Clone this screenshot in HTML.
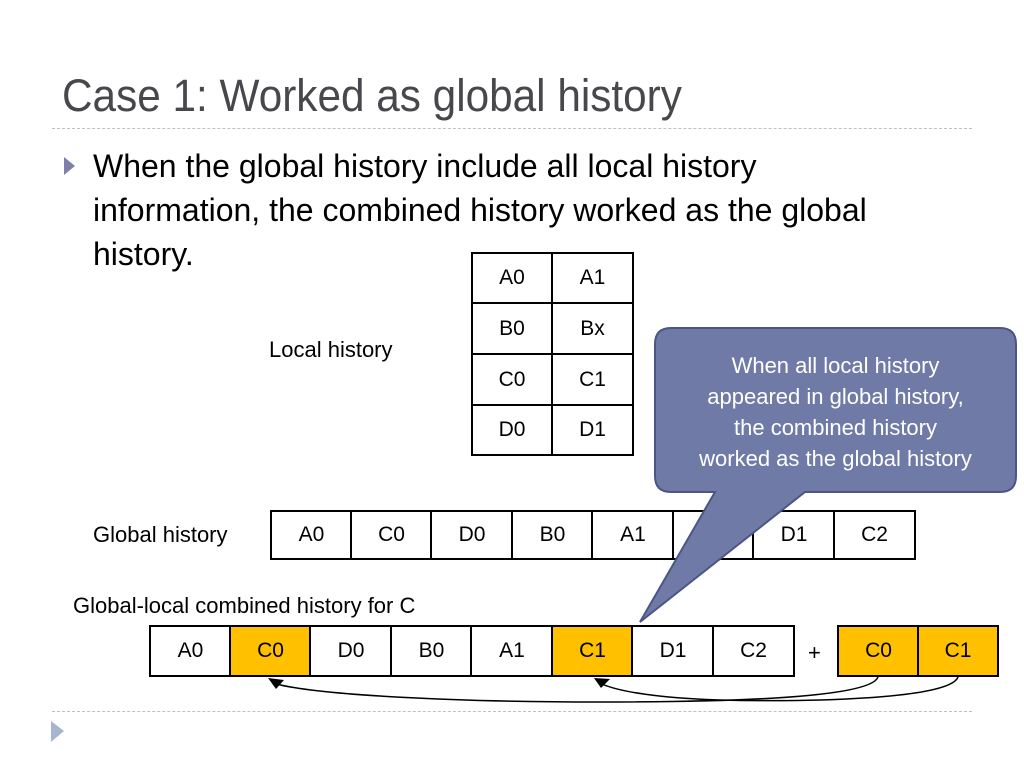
<!DOCTYPE html>
<html><head><meta charset="utf-8"><style>
body{margin:0;width:1024px;height:768px;background:#fff;position:relative;overflow:hidden;font-family:"Liberation Sans",Arial,sans-serif;}
.a{position:absolute;}
.c{position:absolute;box-sizing:border-box;border:2px solid #000;background:#fff;display:flex;align-items:center;justify-content:center;font-size:21px;color:#000;}
.y{background:#ffc000;}
.dash{position:absolute;left:52px;width:920px;border-top:1px dashed #c0c0c0;}
</style></head><body>
<div class="a" style="left:62px;top:70px;font-size:45px;color:#48474c;white-space:nowrap;transform:scaleX(0.94);transform-origin:left;">Case 1: Worked as global history</div>
<div class="dash" style="top:128px"></div>
<svg class="a" style="left:64px;top:157px" width="12" height="18"><polygon points="0,0 11,9 0,18" fill="#7e80a8"/></svg>
<div class="a" style="left:93px;top:144px;font-size:32px;line-height:44px;color:#000;width:820px;">When the global history include all local history information, the combined history worked as the global history.</div>

<div class="a" style="left:269px;top:337px;font-size:22px;">Local history</div>
<div class="c" style="left:471px;top:252px;width:82px;height:52px">A0</div>
<div class="c" style="left:551px;top:252px;width:83px;height:52px">A1</div>
<div class="c" style="left:471px;top:302px;width:82px;height:53px">B0</div>
<div class="c" style="left:551px;top:302px;width:83px;height:53px">Bx</div>
<div class="c" style="left:471px;top:353px;width:82px;height:53px">C0</div>
<div class="c" style="left:551px;top:353px;width:83px;height:53px">C1</div>
<div class="c" style="left:471px;top:404px;width:82px;height:52px">D0</div>
<div class="c" style="left:551px;top:404px;width:83px;height:52px">D1</div>

<div class="a" style="left:93px;top:522px;font-size:22px;">Global history</div>
<div class="c" style="left:270px;top:510px;width:83px;height:50px">A0</div>
<div class="c" style="left:350px;top:510px;width:83px;height:50px">C0</div>
<div class="c" style="left:430px;top:510px;width:84px;height:50px">D0</div>
<div class="c" style="left:511px;top:510px;width:83px;height:50px">B0</div>
<div class="c" style="left:591px;top:510px;width:84px;height:50px">A1</div>
<div class="c" style="left:672px;top:510px;width:83px;height:50px">C1</div>
<div class="c" style="left:752px;top:510px;width:84px;height:50px">D1</div>
<div class="c" style="left:833px;top:510px;width:83px;height:50px">C2</div>

<div class="a" style="left:73px;top:593px;font-size:22px;">Global-local combined history for C</div>
<div class="c" style="left:149px;top:625px;width:83px;height:52px">A0</div>
<div class="c y" style="left:229px;top:625px;width:83px;height:52px">C0</div>
<div class="c" style="left:309px;top:625px;width:84px;height:52px">D0</div>
<div class="c" style="left:390px;top:625px;width:83px;height:52px">B0</div>
<div class="c" style="left:470px;top:625px;width:84px;height:52px">A1</div>
<div class="c y" style="left:551px;top:625px;width:83px;height:52px">C1</div>
<div class="c" style="left:631px;top:625px;width:84px;height:52px">D1</div>
<div class="c" style="left:712px;top:625px;width:83px;height:52px">C2</div>
<div class="a" style="left:808px;top:640px;font-size:22px;">+</div>
<div class="c y" style="left:837px;top:625px;width:83px;height:52px">C0</div>
<div class="c y" style="left:917px;top:625px;width:82px;height:52px">C1</div>

<svg class="a" style="left:0;top:0" width="1024" height="768">
<path d="M878,677 C870,700 700,702 600,702 C450,702 320,695 276,684" fill="none" stroke="#000" stroke-width="1.5"/>
<polygon points="268,678 284,680 276,689" fill="#000"/>
<path d="M958,677 C950,700 800,702 720,700 C660,698 620,692 602,684" fill="none" stroke="#000" stroke-width="1.5"/>
<polygon points="594,678 610,679 601,688" fill="#000"/>
<path d="M671,328 H1000 Q1016,328 1016,344 V476 Q1016,492 1000,492 H805 L640,622 L715,492 H671 Q655,492 655,476 V344 Q655,328 671,328 Z" fill="#6f7aa6" stroke="#4b5684" stroke-width="2"/>
</svg>
<div class="a" style="left:655px;top:350px;width:361px;text-align:center;font-size:22px;line-height:31px;color:#fff;">When all local history<br>appeared in global history,<br>the combined history<br>worked as the global history</div>

<div class="dash" style="top:711px"></div>
<svg class="a" style="left:51px;top:721px" width="14" height="22"><polygon points="0,0 13,10 0,21" fill="#a7b6d0"/></svg>
</body></html>
